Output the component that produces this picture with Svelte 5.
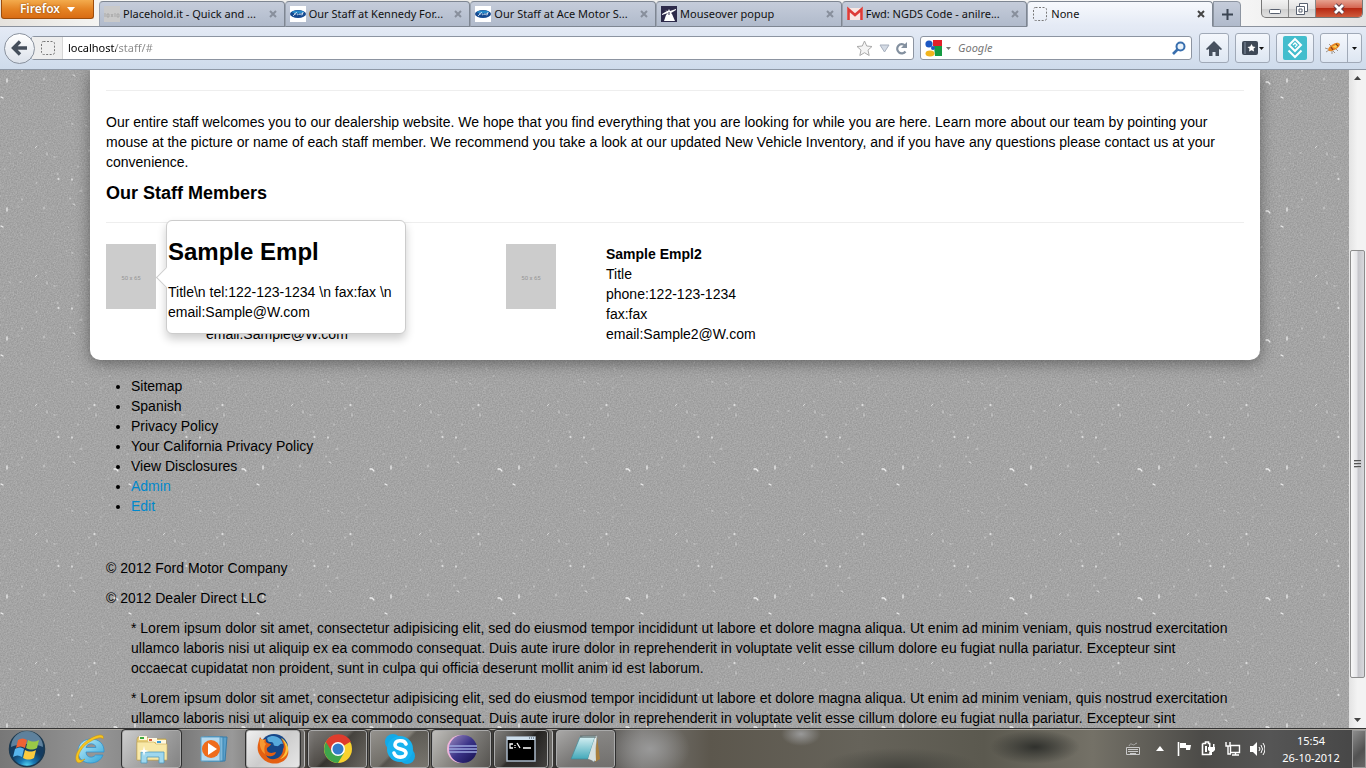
<script>
  const tabs = [
    { icon: 'placeholder', title: 'Placehold.it - Quick and ...' },
    { icon: 'ford', title: 'Our Staff at Kennedy For...' },
    { icon: 'ford', title: 'Our Staff at Ace Motor S...' },
    { icon: 'popup', title: 'Mouseover popup' },
    { icon: 'gmail', title: 'Fwd: NGDS Code - anilre...' },
    { icon: 'none', title: 'None', active: true }
  ];
  const staff = [
    { name: 'Sample Empl', email: 'Sample@W.com', open: true },
    { name: 'Sample Empl2', email: 'Sample2@W.com' }
  ];
  const links = ['Sitemap', 'Spanish', 'Privacy Policy', 'Your California Privacy Policy', 'View Disclosures'];
  const apps = [
    { id: 'ie', label: 'Internet Explorer' },
    { id: 'explorer', label: 'Windows Explorer', framed: true, lit: true },
    { id: 'wmp', label: 'Media Player' },
    { id: 'firefox', label: 'Firefox', framed: true, active: true, stack: true },
    { id: 'chrome', label: 'Chrome', framed: true },
    { id: 'skype', label: 'Skype', framed: true },
    { id: 'eclipse', label: 'Eclipse', framed: true, lit: true },
    { id: 'cmd', label: 'Command Prompt', framed: true, stack: true },
    { id: 'notepad', label: 'Notepad', framed: true, lit: true }
  ];
  const lorem =
    '* Lorem ipsum dolor sit amet, consectetur adipisicing elit, sed do eiusmod tempor incididunt ut labore et dolore magna aliqua. Ut enim ad minim veniam, quis nostrud exercitation ullamco laboris nisi ut aliquip ex ea commodo consequat. Duis aute irure dolor in reprehenderit in voluptate velit esse cillum dolore eu fugiat nulla pariatur. Excepteur sint occaecat cupidatat non proident, sunt in culpa qui officia deserunt mollit anim id est laborum.';
  let address = $state('localhost/staff/#');
  let query = $state('');
</script>

{#snippet favicon(kind)}
  <svg class="favicon" viewBox="0 0 16 16" aria-hidden="true">
    {#if kind === 'placeholder'}
      <rect width="16" height="16" fill="#c9c9c9" />
      <path d="M1 7v4M3 8h2v3H3zM7 8l2 3M9 8l-2 3M11 7v4M13 8h2v3h-2z" stroke="#a2a2a2" fill="none" stroke-width=".8" />
    {:else if kind === 'ford'}
      <rect width="16" height="16" fill="#fff" />
      <ellipse cx="8" cy="8" rx="8" ry="4" fill="#164a91" />
      <ellipse cx="8" cy="6" rx="6" ry="1.500" fill="#2a9ad8" opacity=".8" />
      <path d="M3 9.800c1.500 0 1.800-3.600 4-3.400M4 8h2.300M7 8.300c1-1 1.400.9.3.8M9 9l.6-1.200 1 .1M11 9.200c-.9-.5.3-1.800 1-1.100l1-1.800-1 3" stroke="#e5f0fa" stroke-width=".8" fill="none" />
    {:else if kind === 'popup'}
      <rect width="16" height="16" fill="#2d2a4a" />
      <path d="M8 3l1 2 6-2v1L10 7l1 1 3 7H3l2-6 2-2-6 2V8l5-3-3-1 4 1z" fill="#fff" />
      <path d="M8 6v3" stroke="#2d2a4a" />
    {:else if kind === 'gmail'}
      <rect y="2" width="16" height="12" rx="1" fill="#f7e6e3" />
      <path d="M1.500 14V3.400L8 9l6.500-5.600V14" fill="none" stroke="#dd3c38" stroke-width="2.600" />
    {:else}
      <rect x="1.500" y="1.500" width="13" height="13" rx="2" fill="none" stroke="#777" stroke-dasharray="2 1.500" />
    {/if}
  </svg>
{/snippet}

{#snippet appIcon(id)}
  <svg class="app-icon" viewBox="0 0 32 32" aria-hidden="true">
    {#if id === 'ie'}
      <path d="M30 19H12c0 6 7 6.500 9.500 3h7.500c-2 5.500-7 8-12.500 8C8.500 30 4 25 4 18.500 4 11 10 6 17 6c8 0 13.500 5 13 13zM12 14.500h10c-.5-5-9-5-10 0z" fill="url(#ieg)" stroke="#2a8fd0" stroke-width=".7" />
      <path d="M3 29C-1 24 5 13 14 7s17-7 15-1c-2-3-9 0-15 4S3 22 5 26c1 2 4 1 6 0-3 3-6 5-8 3z" fill="#f7c51d" stroke="#c18c12" stroke-width=".5" />
    {:else if id === 'explorer'}
      <path d="M1 6l1-2h9l2 2h17v21H1z" fill="#e9cf79" stroke="#b99b45" stroke-width=".7" />
      <path d="M3 3h8v4H3z" fill="#fff8df" /><path d="M4 4h4v2H4z" fill="#3aa93c" /><path d="M12 5h9v4h-9z" fill="#fff8df" /><path d="M13 6h3v2h-3z" fill="#dc6340" />
      <path d="M20 7h10v4H20z" fill="#fff8df" /><path d="M21 8h4v2h-4z" fill="#3c9bd4" />
      <path d="M1 9h17l2 2h11v16H1z" fill="#f8e8a7" stroke="#c6aa58" stroke-width=".6" />
      <path d="M5 30V19h23v11h-5v-6H11v6z" fill="#9ed7ee" stroke="#509abd" stroke-width=".8" />
      <path d="M8 13l1 4 4 1-4 1-1 4-1-4-4-1 4-1z" fill="#fff" />
    {:else if id === 'wmp'}
      <path d="M10 4h19l-2 24H10z" fill="#5ba0cb" stroke="#387ba6" /><path d="M6 4h19v24H6z" fill="#7fb9da" stroke="#3883b2" />
      <path d="M3 4h19v24H3z" fill="#b5d9ee" stroke="#5b9fc6" />
      <circle cx="13" cy="16" r="9" fill="#ef6c1c" /><path d="M10 10l9 6-9 6z" fill="#fff" />
    {:else if id === 'firefox'}
      <circle cx="17" cy="15" r="14" fill="#174788" /><path d="M10 5c7-5 15 0 16 6-4-1-3 3-7 2-4 0-1-4-5-4s-3-2-4-4z" fill="#56a9dc" />
      <path d="M3 4l2 3 4-1c-1 3 1 4 5 5-1 3-5 3-4 6 1 4 6 3 9 2-1 5-8 5-10 3 4 8 17 4 17-6 2-3 0-7-2-10 7 5 9 13 6 18-4 8-18 9-25 1S1 11 3 4z" fill="#e46012" />
      <path d="M24 5c7 7 6 16-1 21 5-1 9-6 8-12-1-4-4-8-7-9z" fill="#fbc53c" /><path d="M3 6c-1 7 1 12 5 15-1-4-1-8 1-10-2-1-2-3-1-4z" fill="#f79831" />
    {:else if id === 'chrome'}
      <circle cx="16" cy="16" r="14" fill="#f9d22e" />
      <path d="M16 16L4 9a14 14 0 0124 0z" fill="#df3c2d" /><path d="M16 16L4 9a14 14 0 0012 21l6-10z" fill="#3fa54c" /><path d="M16 9h13a14 14 0 00-25 0l6 10z" fill="#df3c2d" />
      <circle cx="16" cy="16" r="7" fill="#fff" /><circle cx="16" cy="16" r="5.500" fill="#347cc8" />
    {:else if id === 'skype'}
      <circle cx="9" cy="9" r="8" fill="#13a9e8" /><circle cx="23" cy="23" r="8" fill="#13a9e8" /><circle cx="16" cy="16" r="13" fill="#18b2ef" />
      <path d="M22 11c-2-5-11-4-11 1 0 5 11 3 11 8 0 5-10 6-12 0" fill="none" stroke="#fff" stroke-width="3.600" stroke-linecap="round" />
    {:else if id === 'eclipse'}
      <circle cx="15" cy="16" r="14" fill="#efb4dc" /><circle cx="17" cy="16" r="14" fill="url(#ecl)" />
      <path d="M3 13h28M3 16h28M3 19h28" stroke="#9ba6de" stroke-width="1.400" />
    {:else if id === 'cmd'}
      <path d="M2 4h28v24H2z" fill="#000" stroke="#a9b8c7" stroke-width="1.500" /><path d="M2 4h28v3H2z" fill="#cbdcea" />
      <path d="M24 5h1m1 0h1m1 0h1" stroke="#345" />
      <path d="M8 11H5v4h3M10 12v1m0 1v1M12 10l3 5M18 15h8" fill="none" stroke="#fff" stroke-width="1.300" />
    {:else}
      <path d="M27 4l3 22-5 3-3-23z" fill="#a87f3d" /><path d="M12 3h15l-3 26-5-4z" fill="#f1f3f2" stroke="#8ba0a5" stroke-width=".6" />
      <path d="M10 4h15l-7 22H1z" fill="url(#noteg)" stroke="#438998" stroke-width=".7" /><path d="M25 4l1 24-8-2z" fill="#d7e1df" />
      <path d="M11 2v3m2-3v3m2-3v3m2-3v3m2-3v3m2-3v3m2-3v3m2-3v3" stroke="#656d6b" />
    {/if}
  </svg>
{/snippet}

<svg class="defs" aria-hidden="true">
  <defs>
    <linearGradient id="ieg" x1="0" y1="0" x2="1" y2="1"><stop stop-color="#c5f1fb" /><stop offset="1" stop-color="#2ca1d7" /></linearGradient>
    <linearGradient id="noteg" x1="0" y1="0" x2="0" y2="1"><stop stop-color="#d5eff2" /><stop offset="1" stop-color="#43a9ba" /></linearGradient>
    <linearGradient id="ecl" x1="0" y1="0" x2="1" y2="1"><stop stop-color="#9d8cc0" /><stop offset=".5" stop-color="#3b3488" /><stop offset="1" stop-color="#120e4f" /></linearGradient>
  </defs>
</svg>

<div class="window">
  <header>
    <div class="titlebar">
      <button class="firefox-menu">Firefox <svg width="8" height="5" viewBox="0 0 8 5"><path d="M0 0h8L4 5z" fill="#fff" /></svg></button>
      <nav class="tabs">
        {#each tabs as tab}
          <div class="tab" class:active={tab.active}>
            <a href="#tab">{@render favicon(tab.icon)}<span>{tab.title}</span></a>
            <button class="close" aria-label="Close tab"><svg width="8" height="8" viewBox="0 0 8 8"><path d="M1 1l6 6M7 1L1 7" stroke="currentColor" stroke-width="2" /></svg></button>
          </div>
        {/each}
        <button class="new-tab" aria-label="New tab"><svg width="11" height="11" viewBox="0 0 11 11"><path d="M5.500 0v11M0 5.500h11" stroke="#3b4552" stroke-width="2" /></svg></button>
      </nav>
      <div class="controls">
        <button aria-label="Minimize"><svg width="14" height="16" viewBox="0 0 14 16"><rect x="1.500" y="8.500" width="11" height="4" rx="1" fill="#fff" stroke="#596170" /></svg></button>
        <button aria-label="Restore"><svg width="14" height="16" viewBox="0 0 14 16"><path d="M4.500 2.500h8v8h-8z" fill="#fff" stroke="#596170" /><path d="M1.500 5.500h8v8h-8zM4 8h3v3H4z" fill="#fff" stroke="#596170" /></svg></button>
        <button class="quit" aria-label="Close"><svg width="14" height="12" viewBox="0 0 14 12"><path d="M3 2l8 8M11 2l-8 8" stroke="#5c3b45" stroke-width="4.600" /><path d="M3 2l8 8M11 2l-8 8" stroke="#fff" stroke-width="2.800" /></svg></button>
      </div>
    </div>
    <div class="toolbar">
      <button class="back" aria-label="Back"><svg width="17" height="16" viewBox="0 0 17 16"><path d="M9 1.500L2.500 8 9 14.500M3 8h13" fill="none" stroke="#444e5b" stroke-width="3.400" /></svg></button>
      <div class="address">
        <span class="identity">{@render favicon('none')}</span>
        <input aria-label="Address" bind:value={address} />
        <button aria-label="Bookmark"><svg width="17" height="17" viewBox="0 0 17 17"><path d="M8.500 1l2.200 5 5.300.5-4 3.600 1.200 5.400-4.700-2.800-4.700 2.800L5 10.100 1 6.500 6.300 6z" fill="#f4f4f4" stroke="#aaa" /></svg></button>
        <button aria-label="History"><svg width="11" height="9" viewBox="0 0 11 9"><path d="M1 1h9L5.500 8z" fill="#d4dbe5" stroke="#a7b0be" /></svg></button>
        <button aria-label="Reload"><svg width="13" height="13" viewBox="0 0 13 13"><path d="M10.500 9.500a4.600 4.600 0 11-.5-6" fill="none" stroke="#83909f" stroke-width="2.200" /><path d="M12 0v6H6z" fill="#83909f" /></svg></button>
      </div>
      <div class="search">
        <svg width="17" height="17" viewBox="0 0 17 17" aria-hidden="true"><path d="M8 0h9v6H8z" fill="#e2202a" /><path d="M9 6h8v10h-7z" fill="#159b43" /><path d="M0 0h8v9H0zM4 9h5v8H0z" fill="#fff" /><circle cx="4" cy="4" r="3.600" fill="#1c58c4" /><circle cx="8" cy="8" r="2" fill="#1c58c4" /><ellipse cx="5" cy="13.500" rx="4.500" ry="3" fill="#f2b51d" /></svg>
        <svg width="5" height="3" viewBox="0 0 5 3" aria-hidden="true"><path d="M0 0h5L2.500 3z" fill="#777" /></svg>
        <input aria-label="Search" placeholder="Google" bind:value={query} />
        <button aria-label="Search"><svg width="14" height="14" viewBox="0 0 14 14"><circle cx="8.500" cy="5.500" r="4" fill="#eaf3fb" stroke="#396fae" stroke-width="2" /><path d="M6 8l-5 5" stroke="#396fae" stroke-width="2.600" /></svg></button>
      </div>
      <button class="tool home" aria-label="Home"><svg width="16" height="15" viewBox="0 0 16 15"><path d="M8 0l8 8-1 1-2-1v7H9.500v-4h-3v4H3V8L1 9 0 8z" fill="#47515f" /></svg></button>
      <button class="tool marks" aria-label="Bookmarks"><svg width="22" height="14" viewBox="0 0 22 14"><rect width="16" height="14" rx="2" fill="#3e4856" /><path d="M3 1v12" stroke="#8390a1" /><path d="M9.500 3l1.300 2.600 2.700.3-2 1.900.6 2.800-2.600-1.400-2.500 1.400.5-2.800-2-1.900 2.700-.3z" fill="#fff" /><path d="M17 6h5l-2.500 3z" fill="#111" /></svg></button>
      <button class="tool layers" aria-label="Layers"><svg width="24" height="24" viewBox="0 0 24 24"><rect width="24" height="24" rx="2" fill="#43bdcd" /><path d="M12 3l6 6-6 6-6-6zM5.500 14.500L12 21l6.500-6.500" fill="none" stroke="#fff" stroke-width="2" /><path d="M10 9l2-2 2 2-2 2" fill="none" stroke="#fff" stroke-width="1.300" /></svg></button>
      <button class="tool firebug" aria-label="Firebug"><svg width="16" height="14" viewBox="0 0 16 14"><path d="M3 8L0 7m4 2l-3 2m6-1v3M6 5L4 3m7 5l2 2m-5 0l2 2" stroke="#8c7d70" stroke-width=".8" /><ellipse cx="9" cy="6" rx="6.500" ry="3" transform="rotate(-30 9 6)" fill="#e98524" /><path d="M7 6l7-4-3 5z" fill="#f8d052" /><path d="M11 3l2 2M6 6l2 3" stroke="#863d16" stroke-width="1.300" /></svg><i></i><svg width="5" height="3" viewBox="0 0 5 3"><path d="M0 0h5L2.500 3z" fill="#111" /></svg></button>
    </div>
  </header>

  <div class="viewport">
    <div class="page">
      <main>
        <hr />
        <p>Our entire staff welcomes you to our dealership website. We hope that you find everything that you are looking for while you are here. Learn more about our team by pointing your mouse at the picture or name of each staff member. We recommend you take a look at our updated New Vehicle Inventory, and if you have any questions please contact us at your convenience.</p>
        <h3>Our Staff Members</h3>
        <hr />
        <div class="staff">
          {#each staff as member}
            <article>
              <div class="photo">50 x 65</div>
              <div class="details">
                {#if !member.open}
                  <strong>{member.name}</strong><br />Title<br />phone:122-123-1234<br />fax:fax<br />
                {/if}
                email:{member.email}
              </div>
              {#if member.open}
                <aside class="popover">
                  <h2>{member.name}</h2>
                  <p>Title\n tel:122-123-1234 \n fax:fax \n email:{member.email}</p>
                </aside>
              {/if}
            </article>
          {/each}
        </div>
      </main>
      <footer>
        <ul>
          {#each links as link}<li>{link}</li>{/each}
          <li><a href="#admin">Admin</a></li>
          <li><a href="#edit">Edit</a></li>
        </ul>
        <p>© 2012 Ford Motor Company</p>
        <p>© 2012 Dealer Direct LLC</p>
        <div class="legal"><p>{lorem}</p><p>{lorem}</p></div>
      </footer>
    </div>
    <div class="scrollbar" aria-hidden="true">
      <svg width="7" height="17" viewBox="0 0 7 17"><path d="M0 10h7L3.500 6z" fill="#444" /></svg>
      <div class="track"><div class="thumb"><svg width="7" height="8" viewBox="0 0 7 8"><path d="M0 .5h7M0 3.500h7M0 6.500h7" stroke="#555" /><path d="M0 1.500h7M0 4.500h7M0 7.500h7" stroke="#bbb" /></svg></div></div>
      <svg width="7" height="17" viewBox="0 0 7 17"><path d="M0 7h7l-3.500 4z" fill="#444" /></svg>
    </div>
  </div>

  <div class="taskbar">
    <button class="start" aria-label="Start"><svg width="38" height="38" viewBox="0 0 38 38"><defs><radialGradient id="orb" cx=".5" cy="1"><stop stop-color="#58e0fb" /><stop offset=".45" stop-color="#1877b3" /><stop offset="1" stop-color="#143b5f" /></radialGradient></defs><circle cx="19" cy="19" r="17.500" fill="url(#orb)" stroke="#1c3950" stroke-width="1.500" /><path d="M3 17a16 16 0 0132 0c-8-4-24-4-32 0z" fill="#b9d7e8" opacity=".45" /><path d="M10 10c3-2 6-2 9 0l-2 8c-3-2-6-2-9 0z" fill="#ee6335" /><path d="M20 10c4 2 7 2 11 0l-2 8c-4 2-7 2-11 0z" fill="#99c846" /><path d="M7 19c4-2 6-2 9 0l-2 8c-3-2-6-2-9 0z" fill="#58b5ec" /><path d="M17 20c4 2 7 2 11 0l-2 8c-4 2-7 2-11 0z" fill="#fccb3e" /></svg></button>
    <div class="apps">
      {#each apps as app}
        <button class="app" class:framed={app.framed} class:active={app.active} class:lit={app.lit} class:stack={app.stack} aria-label={app.label}>{@render appIcon(app.id)}</button>
      {/each}
    </div>
    <div class="tray">
      <svg width="14" height="14" viewBox="0 0 14 14"><path d="M.5 5.500h13v7H.5zM2 7.500h10M2 9.500h10M4 11.500h6" fill="none" stroke="#c9c9c9" stroke-dasharray="none" /><path d="M3 4c2-5 4 1 6-2l2-1" fill="none" stroke="#aaa" /></svg>
      <svg width="8" height="5" viewBox="0 0 8 5"><path d="M0 5h8L4 0z" fill="#fff" /></svg>
      <svg width="15" height="14" viewBox="0 0 15 14"><path d="M1.500 0v14" stroke="#fff" stroke-width="1.600" /><path d="M3 1h6v2h5l-1 5H9V6H3z" fill="#fff" /></svg>
      <svg width="15" height="15" viewBox="0 0 15 15"><path d="M1.500 2.500h3V1h3v1.500h2M1.500 2.500v11H9V11" fill="none" stroke="#fff" stroke-width="1.600" /><path d="M4 5h2v6H4z" fill="#fff" /><path d="M7 6h7v3l-2 2h-1v3H9v-3L7 9zM8 3h1.500v3H8zm4 0h1.500v3H12z" fill="#fff" /></svg>
      <svg width="16" height="14" viewBox="0 0 16 14"><path d="M5.500 3.500h9v7h-9zM7 13h7m-3.500-2v2M1 0v4h4V0M3 4v8h3" fill="none" stroke="#fff" stroke-width="1.400" /></svg>
      <svg width="15" height="14" viewBox="0 0 15 14"><path d="M0 4h3l4-4v14l-4-4H0z" fill="#fff" /><path d="M9 5q2 2 0 4M11 3q3 4 0 8M13 1q4 6 0 12" fill="none" stroke="#fff" /></svg>
    </div>
    <time>15:54<br />26-10-2012</time>
    <button class="desktop" aria-label="Show desktop"></button>
  </div>
</div>

<style>
  :global(body) { margin: 0; }
  button { font: inherit; color: inherit; margin: 0; padding: 0; border: 0; background: none; display: flex; align-items: center; justify-content: center; flex: none; }
  input { font: inherit; min-width: 0; flex: 1; border: 0; padding: 0; outline: 0; background: none; }
  svg { display: block; flex: none; }
  .defs { position: absolute; width: 0; height: 0; }
  .window { height: 100vh; display: flex; flex-direction: column; overflow: hidden; font-family: "Liberation Sans", Arial, sans-serif; font-size: 14px; line-height: 20px; color: #000; }
  header { flex: none; font-family: "Noto Sans", "Segoe UI", sans-serif; font-size: 12px; }

  .titlebar { height: 27px; display: flex; align-items: flex-start; background: linear-gradient(90deg, #e5e2dd, #f6f6f4 8%, #e9e8e5 30%, #f3f3f2 60%, #f7f7f7 90%, #e2e2e2); box-shadow: inset 0 -1px #8b929d; }
  .firefox-menu { width: 93px; height: 19px; margin: 0 5px 0 1px; box-sizing: border-box; border: 1px solid #9d4d0c; border-top: 0; border-radius: 0 0 3px 3px; background: linear-gradient(#f3ab4d, #e58424 50%, #d96c14); color: #fff; font-weight: 600; gap: 7px; line-height: 16px; text-shadow: 0 0 2px #793b06; }
  .tabs { flex: 1; min-width: 0; display: flex; padding-top: 1px; }
  .tab { flex: 1; min-width: 0; height: 26px; box-sizing: border-box; display: flex; align-items: center; padding: 0 7px 0 4px; border: 1px solid #7e8692; border-left-color: #9ba3b0; border-radius: 4px 4px 0 0; background: linear-gradient(#c5ccda, #b0bacb); color: #888f9c; }
  .tab.active { background: linear-gradient(#f7f9fd, #e4eaf5); border-bottom-color: #e4eaf5; color: #444; }
  .tab a { flex: 1; min-width: 0; display: flex; align-items: center; gap: 3px; color: #111; text-decoration: none; white-space: nowrap; font-size: 11px; }
  .favicon { width: 16px; height: 16px; }
  .close { width: 8px; height: 16px; }
  .new-tab { width: 28px; height: 26px; border: 1px solid #8d95a1; border-radius: 0 4px 0 0; box-sizing: border-box; background: linear-gradient(#c5ccda, #b0bacb); }
  .controls { display: flex; margin: 0 3px 0 20px; height: 18px; box-sizing: border-box; border: 1px solid #777; border-top: 0; border-radius: 0 0 5px 5px; overflow: hidden; background: linear-gradient(#f2f2f2, #e2e2e2 50%, #cecece 51%, #e2e2e2); }
  .controls button { width: 27px; border-right: 1px solid #888; }
  .controls .quit { width: 46px; border: 0; background: linear-gradient(#e6a18f, #d56753 45%, #b72913 50%, #cf5b3c); }

  .toolbar { display: flex; align-items: center; height: 42px; padding-right: 4px; border-bottom: 1px solid #8e98a6; background: linear-gradient(#e4eaf5, #cedbeb); }
  .back { width: 31px; height: 31px; margin-left: 4px; border: 1px solid #8a929e; border-radius: 50%; background: linear-gradient(#fff, #dbe1ea); box-sizing: border-box; z-index: 1; }
  .address, .search { box-sizing: border-box; height: 24px; display: flex; align-items: center; background: #fff; border: 1px solid #8c94a1; border-radius: 3px; }
  .address { flex: 1; min-width: 0; margin-left: -4px; padding-right: 5px; gap: 5px; }
  .address button { min-width: 12px; }
  .identity { height: 22px; box-sizing: border-box; display: flex; align-items: center; padding: 0 6px 0 8px; border-right: 1px solid #d6d6d6; background: #eee; }
  .address input { font-size: 11px; color: transparent; background: linear-gradient(90deg, #000 48px, #888 48px); background-clip: text; -webkit-background-clip: text; }
  .search { width: 272px; margin: 0 7px 0 6px; padding: 0 5px 0 4px; gap: 4px; }
  .search input { font-style: italic; padding-left: 3px; font-size: 11px; }
  .search input::placeholder { color: #777; opacity: 1; }
  .tool { height: 30px; box-sizing: border-box; border: 1px solid #a0a9b7; border-radius: 3px; background: linear-gradient(#f4f7fc, #dde6f2); margin-right: 6px; }
  .home { width: 30px; }
  .marks { width: 35px; }
  .layers { width: 38px; }
  .firebug { width: 42px; margin: 0; gap: 4px; }
  .firebug i { width: 1px; height: 28px; background: #a0a9b7; margin-left: 2px; }

  .viewport { flex: 1; min-height: 0; display: flex; overflow: hidden; }
  .page { flex: 1; min-width: 0; padding-left: 1px; overflow: hidden; background: #a4a4a4 url("data:image/svg+xml,%3Csvg xmlns='http://www.w3.org/2000/svg' width='128' height='129'%3E%3Cfilter id='n' x='0' y='0' width='100%25' height='100%25' color-interpolation-filters='sRGB'%3E%3CfeTurbulence type='fractalNoise' baseFrequency='.7' numOctaves='2' stitchTiles='stitch'/%3E%3CfeColorMatrix values='.16 0 0 0 .563 .16 0 0 0 .563 .16 0 0 0 .563 0 0 0 0 1'/%3E%3C/filter%3E%3Crect width='128' height='129' filter='url(%23n)'/%3E%3Cg fill='none' stroke='%23eee' stroke-linecap='round'%3E%3Cpath stroke-width='1.300' d='M78 35h1M56 67v1M42 67h1M98 99l2 0 2 2M119 96v3M113 114l2 1'/%3E%3Cpath opacity='.65' d='M4 41h1M19 36l2-2M31 41v2M38 45h1M56 12h1M80 44v2M73 38v1M62 54v1M41 62h1M28 95v2M54 86v1M57 92l2 1M64 79h2M20 71h1M6 87v1'/%3E%3Cpath opacity='.4' d='M116 57h1M92 109h1M52 115l1 1M38 121v1M86 128h1M102 24v1M93 6h1M30 31v1M18 20v1M95 91h1M121 41l2 1M50 10h1M69 13l2 1M84 18h1M2 95h1M111 84h1M5 123h1'/%3E%3C/g%3E%3C/svg%3E") 16px 42px; }
  main { max-width: 1138px; margin: 0 auto; padding: 20px 16px 16px; background: #fff; border-radius: 0 0 10px 10px; box-shadow: 0 3px 15px rgba(0, 0, 0, .4); }
  hr { height: 1px; border: 0; margin: 0 0 21px; background: #eee; }
  main > p, h3 { margin: 0; }
  h3 { font-size: 18px; line-height: 42px; margin-bottom: 8px; }
  .staff { display: flex; }
  article { position: relative; width: 400px; display: flex; gap: 50px; }
  .details { align-self: flex-end; }
  .photo { width: 50px; height: 65px; background: #ccc; color: #969696; font: 6px/68px Roboto, sans-serif; text-align: center; }
  .popover { position: absolute; left: 60px; top: -24px; width: 236px; padding: 1px; border: 1px solid #ccc; border-radius: 6px; background: #fff; box-shadow: 0 5px 10px rgba(0, 0, 0, .2); }
  .popover::before { content: ""; position: absolute; left: -8px; top: 49px; width: 14px; height: 14px; border: solid #ccc; border-width: 0 0 1px 1px; background: #fff; transform: rotate(45deg); }
  .popover h2 { position: relative; margin: 10px 0; font-size: 24px; line-height: 40px; }
  .popover p { position: relative; margin: 0 0 10px; }
  footer { max-width: 1138px; margin: 0 auto; padding: 16px; }
  ul { margin: 0 0 42px; padding-left: 25px; }
  footer a { color: #0088cc; text-decoration: none; }
  footer p { margin: 0 0 10px; }
  .legal { padding: 0 12px 0 25px; }

  .scrollbar { width: 17px; flex: none; display: flex; flex-direction: column; align-items: center; background: linear-gradient(90deg, #e3e3e3, #f3f3f3 50%); }
  .track { flex: 1; width: 100%; display: flex; flex-direction: column; padding: 163px 1px 33px; box-sizing: border-box; }
  .thumb { flex: 1; display: flex; align-items: center; justify-content: center; border: 1px solid #8d8d8d; border-radius: 2px; background: linear-gradient(90deg, #f8f8f8, #e5e5e8 45%, #c5c5ca 55%, #d8d8dc); }

  .taskbar { flex: none; height: 40px; box-sizing: border-box; display: flex; align-items: center; border-top: 1px solid #333; box-shadow: inset 0 1px #aaa69f; font: 12px/17px "Noto Sans", "Segoe UI", sans-serif; color: #fff; background: radial-gradient(ellipse 20px 12px at 801px 5px, #999, transparent), radial-gradient(ellipse 45px 17px at 1035px 18px, #30312d, transparent), radial-gradient(ellipse 80px 20px at 900px 39px, #44443e, transparent), radial-gradient(ellipse 40px 30px at 650px 20px, #999, transparent), linear-gradient(90deg, #777 0, #969696 7%, #777 13%, #999 17%, #3e3a35 23%, #77746c 30%, #292725 39%, #787673 47%, #5c574d 52%, #66635a 63%, #5b594f 72%, #747167 80%, #4c4b48 88%, #555 93%, #454545); }
  .start { width: 54px; }
  .apps { flex: 1; display: flex; gap: 3px; padding-left: 6px; }
  .app { width: 59px; height: 38px; box-sizing: border-box; border: 1px solid transparent; border-radius: 3px; }
  .app.framed { border-color: #aaa; outline: 1px solid #2f2f2f; background: linear-gradient(135deg, #ffffff55, #ffffff15 45%, #00000030 50%, #ffffff15); }
  .app.lit { background: linear-gradient(135deg, #ffffff90, #ffffff45 50%, #ffffff18); }
  .app.active { background: linear-gradient(135deg, #f0f0f0, #ccc 50%, #e6e6e6); }
  .app.stack { width: 54px; margin-right: 5px; box-shadow: 4px 0 #6d6b68, 5px 0 #bbb; }
  .app-icon { width: 32px; height: 32px; }
  .tray { display: flex; align-items: center; gap: 9px; }
  .tray svg:nth-child(2) { margin: 0 4px 0 7px; }
  time { width: 74px; margin: 0 4px 0 9px; text-align: center; font-size: 11px; }
  .desktop { width: 14px; height: 38px; box-sizing: border-box; border: 1px solid #999; background: linear-gradient(135deg, #ffffff60, #ffffff10 60%, #ffffff30); }
</style>
